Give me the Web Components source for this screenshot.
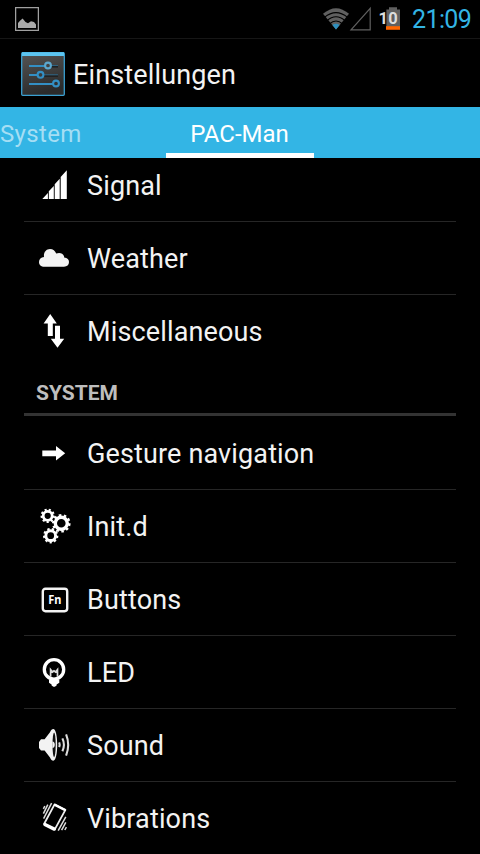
<!DOCTYPE html>
<html lang="de">
<head>
<meta charset="utf-8">
<title>Einstellungen</title>
<style>
    html, body {
        margin: 0;
        height: 100%;
        overflow: hidden;
        background: #000;
    }
</style>
</head>
<body>
<settings-app></settings-app>

<script>
// 36x36 icons of the preference rows
const icons = {
    signal: `<path d="M6.3 32L11.9 26V32ZM12.8 32V24.3L17.8 18.9V32ZM18.7 32V17.2L23.7 11.8V32ZM24.7 32V10L30.8 3.3V32Z"/>`,
    weather: `<path fill="#f3f3f3" d="M8.5 26.7C5 26.7 3 24.7 3 21.9C3 19.2 5 17.2 8 16.9C7.4 12.4 10.2 9 14 9C17 9 19.2 10.7 20.2 13.6C24 12.1 28 13.6 28.2 17.4C31.4 17.6 33 19.5 33 22C33 24.8 31 26.7 28 26.7Z"/>`,
    misc: `<path d="M14.2 1L20.8 10.4H16.8V23H11.8V10.4H7.6ZM19 12.7H24V25.7H28.2L21.5 34.8L14.8 25.7H19Z"/>`,
    gesture: `<path d="M6.3 15.4H20V11L29.2 18.3L20 25.6V21.2H6.3Z"/>`,
    gears: `
        <g fill="none" stroke="#fff">
            <circle cx="11.7" cy="7.8" r="4.5" stroke-width="2.8"/>
            <circle cx="11.7" cy="7.8" r="6" stroke-width="2.4" pathLength="18" stroke-dasharray="1"/>
            <circle cx="25.3" cy="15.3" r="6" stroke-width="3.4"/>
            <circle cx="25.3" cy="15.3" r="8" stroke-width="2.6" pathLength="20" stroke-dasharray="1"/>
            <circle cx="14.7" cy="27.7" r="4.9" stroke-width="3"/>
            <circle cx="14.7" cy="27.7" r="6.5" stroke-width="2.4" pathLength="18" stroke-dasharray="1"/>
        </g>`,
    buttons: `
        <rect x="6.8" y="7.8" width="24.4" height="22.4" rx="2.6" fill="none" stroke="#f3f3f3" stroke-width="2.4"/>
        <text x="12.2" y="23.2" font-family="Noto Sans, sans-serif" font-weight="700" font-size="11.8" textLength="13.2" lengthAdjust="spacingAndGlyphs">Fn</text>`,
    led: `
        <circle cx="18" cy="15.4" r="9.7" fill="none" stroke="#fff" stroke-width="3.3"/>
        <path fill="none" stroke="#ddd" stroke-width="1.7" d="M14.6 22.8V15.6L16.6 18L18 16.8L19.5 18L21.5 15.6V22.8"/>
        <path d="M13 25.8H23.3V28.8L20.6 30.4V31.4L18.8 32.8H17.4L15.6 31.4V30.4L13 28.8Z"/>`,
    sound: `
        <path fill="#f3f3f3" d="M3 15L5 12.2H8.6L14 5.2C15 3 16 2 17.3 2C19.8 2 21.2 9 21.2 17.8C21.2 26.6 19.8 33.7 17.3 33.7C16 33.7 15 32.6 14 30.4L8.6 23.6H5L3 21Z"/>
        <ellipse cx="18.1" cy="17.8" rx="1.6" ry="12.4" fill="#111"/>
        <path d="M16.4 14.6C18 14.6 18.8 16 18.8 17.8C18.8 19.6 18 21 16.4 21Z" fill="#f3f3f3"/>
        <path fill="none" stroke="#ddd" stroke-width="2.1" d="M23.2 15.4Q24.2 17.8 23.2 20.2M26.4 11.4Q29.4 17.8 26.4 24.2M30.1 7.4Q34.3 17.8 30.1 28.6"/>`,
    vibrations: `
        <path fill="none" stroke="#eee" stroke-width="1.8" stroke-linejoin="round" d="M18.6 4.4L29.4 9.9L18.8 29.4L8.2 23.8Z"/>
        <path stroke="#fff" stroke-width="3.4" stroke-linecap="round" d="M8.9 24.5L18.3 29.1"/>
        <path stroke="#fff" stroke-width="2.4" stroke-linecap="round" d="M19 5L28.8 10"/>
        <path fill="none" stroke="#ddd" stroke-width="1.5" d="M15.6 3.2L7.6 18.6M11.8 4.6L7.4 13.6M8.8 6L7.4 8.8M29.8 16.8L22.2 30.6M29.8 22.4L25.6 30.2M30.4 27.2L28.8 30"/>`
};

class StatusBar extends HTMLElement {
    constructor() {
        super();
        this.attachShadow({mode: "open"}).innerHTML = `
            <style>
                :host {
                    display: flex;
                    align-items: center;
                    box-sizing: border-box;
                    height: 39px;
                    padding: 0 9px 0 15px;
                    border-bottom: 1px solid #161616;
                }
                svg { display: block; }
                .right {
                    display: flex;
                    align-items: center;
                    margin-left: auto;
                }
                .clock {
                    margin-left: 11px;
                    color: #33b5e5;
                    font-size: 25px;
                    line-height: 38px;
                    padding-top: 1px;
                    width: 59px;
                    white-space: nowrap;
                    letter-spacing: -0.6px;
                }
            </style>
            <svg width="24" height="24" viewBox="0 0 24 24">
                <rect x="0.6" y="0.6" width="22.8" height="22.8" fill="none" stroke="#a0a0a0" stroke-width="1.3"/>
                <path fill="#aaa" d="M3 21V16L5 13.8L7.6 11.4L10.5 15L13 16.2L16 14.2L19 15L21 17.4V21Z"/>
            </svg>
            <div class="right">
                <svg width="78" height="26" viewBox="324 6 78 26">
                    <path fill="#606060" d="M324 13.8Q337 2.6 350 13.8L337 29.4Z"/>
                    <g fill="none" stroke="#000" stroke-width="1.1">
                        <path d="M325.4 17.4Q337 7.8 348.6 17.4"/>
                        <path d="M327.8 20.8Q337 12.8 346.2 20.8"/>
                        <path d="M330.4 24Q337 18 343.6 24"/>
                    </g>
                    <path fill="#2f8fbd" d="M333.4 25.1Q337 22.6 340.6 25.1L337 29.6Z"/>
                    <path fill="none" stroke="#606060" stroke-width="1.2" d="M371.2 8.4V29.8H352Z"/>
                    <path fill="#606060" d="M387.4 9.6H390V7.2H398V9.6H401V27H387.4Z"/>
                    <path fill="#ff6600" d="M387 26.2H401V29.8H387Z"/>
                    <text x="379.6" y="24" fill="#ddd" font-family="Roboto, sans-serif" font-weight="700" font-size="16.5" textLength="19">10</text>
                </svg>
                <span class="clock">21:09</span>
            </div>`;
    }
}

class ActionBar extends HTMLElement {
    constructor() {
        super();
        this.attachShadow({mode: "open"}).innerHTML = `
            <style>
                :host {
                    display: flex;
                    align-items: center;
                    gap: 8px;
                    height: 68px;
                    padding-left: 21px;
                    color: #f3f3f3;
                    font-size: 27px;
                    letter-spacing: 0.14px;
                }
                svg { display: block; margin-top: 1px; }
                span { padding-top: 3px; }
            </style>
            <svg width="44" height="44" viewBox="0 0 44 44">
                <defs>
                    <linearGradient id="plate" x1="0" y1="0" x2="0.3" y2="1">
                        <stop offset="0" stop-color="#555"/>
                        <stop offset="1" stop-color="#2b2b2b"/>
                    </linearGradient>
                </defs>
                <rect x="0.7" y="0.7" width="42.6" height="42.6" rx="1" fill="url(#plate)" stroke="#3a9fd0" stroke-width="1.3"/>
                <path fill="#5cc4f0" d="M1 0.3H43V4H1Z"/>
                <g stroke="#1c1c1c" stroke-width="1.4"><path d="M29 14.8H37M21 24H37"/></g>
                <g fill="none" stroke="#338fc4">
                    <path stroke-width="1.8" d="M8 14H24M8 23H17M8 32H32"/>
                    <path stroke="#2c6c91" stroke-width="0.9" d="M30 13.6H37M23 22.8H37"/>
                    <circle cx="27" cy="13.5" r="2.9" stroke="#5ca8cf" stroke-width="2.1"/>
                    <circle cx="19.5" cy="22.8" r="2.9" stroke-width="2.1"/>
                    <circle cx="35" cy="31.5" r="2.9" stroke-width="2.1"/>
                </g>
            </svg>
            <span><slot></slot></span>`;
    }
}

class TabStrip extends HTMLElement {
    constructor() {
        super();
        this.attachShadow({mode: "open"}).innerHTML = `
            <style>
                :host {
                    display: grid;
                    grid-template-columns: 166px 148px 1fr;
                    height: 51px;
                    background: #33b5e5;
                    color: #fff;
                    font-size: 24px;
                    line-height: 54px;
                    white-space: nowrap;
                }
                .prev {
                    color: #a5def4;
                    letter-spacing: 0.35px;
                }
                .current {
                    box-sizing: border-box;
                    height: 51px;
                    border-bottom: 5px solid #fff;
                    padding-right: 1px;
                    text-align: center;
                }
            </style>
            <div class="prev"><slot name="prev"></slot></div>
            <div class="current"><slot></slot></div>`;
    }
}

class PrefHeader extends HTMLElement {
    constructor() {
        super();
        this.attachShadow({mode: "open"}).innerHTML = `
            <style>
                :host {
                    display: block;
                    box-sizing: border-box;
                    height: 49px;
                    margin-bottom: 1px;
                    padding-left: 12px;
                    border-bottom: 3px solid #333;
                    color: #bebebe;
                    font-size: 21px;
                    font-weight: 700;
                    line-height: 53px;
                }
            </style>
            <slot></slot>`;
    }
}

class PrefItem extends HTMLElement {
    connectedCallback() {
        if (this.shadowRoot) return;
        this.attachShadow({mode: "open"}).innerHTML = `
            <style>
                :host {
                    display: flex;
                    align-items: center;
                    gap: 15px;
                    height: 72px;
                    padding-left: 12px;
                    border-bottom: 1px solid #262626;
                    color: #f3f3f3;
                    font-size: 27px;
                    letter-spacing: 0.14px;
                    white-space: nowrap;
                }
                :host([last]) { border-bottom: none; }
                svg { display: block; flex: none; fill: #fff; letter-spacing: 0; }
                span { padding-top: 1px; }
            </style>
            <svg width="36" height="36" viewBox="0 0 36 36">${icons[this.getAttribute('icon')]}</svg>
            <span><slot></slot></span>`;
    }
}

class SettingsApp extends HTMLElement {
    constructor() {
        super();
        this.attachShadow({mode: "open"}).innerHTML = `
            <style>
                :host {
                    display: flex;
                    flex-direction: column;
                    width: 480px;
                    height: 854px;
                    overflow: hidden;
                    background: #000;
                    font-family: Roboto, sans-serif;
                }
                status-bar, action-bar, tab-strip { flex: none; }
                main {
                    flex: 1;
                    min-height: 0;
                    overflow: hidden;
                    padding: 0 24px;
                }
                /* list is scrolled a little under the tabs */
                .list { margin-top: -9px; }
            </style>
            <status-bar></status-bar>
            <action-bar>Einstellungen</action-bar>
            <tab-strip><span slot="prev">System</span>PAC-Man</tab-strip>
            <main>
                <div class="list">
                    <pref-item icon="signal">Signal</pref-item>
                    <pref-item icon="weather">Weather</pref-item>
                    <pref-item icon="misc" last>Miscellaneous</pref-item>
                    <pref-header>SYSTEM</pref-header>
                    <pref-item icon="gesture">Gesture navigation</pref-item>
                    <pref-item icon="gears">Init.d</pref-item>
                    <pref-item icon="buttons">Buttons</pref-item>
                    <pref-item icon="led">LED</pref-item>
                    <pref-item icon="sound">Sound</pref-item>
                    <pref-item icon="vibrations" last>Vibrations</pref-item>
                </div>
            </main>`;
    }
}

window.customElements.define('status-bar', StatusBar);
window.customElements.define('action-bar', ActionBar);
window.customElements.define('tab-strip', TabStrip);
window.customElements.define('pref-header', PrefHeader);
window.customElements.define('pref-item', PrefItem);
window.customElements.define('settings-app', SettingsApp);
</script>
</body>
</html>
